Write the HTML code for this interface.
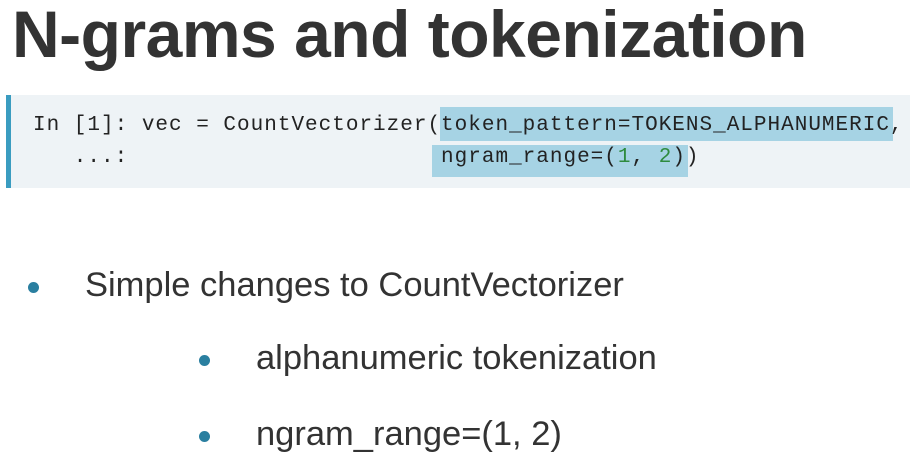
<!DOCTYPE html>
<html><head><style>
body{margin:0;width:910px;height:468px;background:#fff;position:relative;overflow:hidden;font-family:"Liberation Sans",sans-serif;color:#333}
.t{position:absolute;left:12px;top:-4px;font-size:66px;font-weight:bold;letter-spacing:-0.5px;white-space:nowrap;color:#333}
.code{position:absolute;left:6px;top:95px;width:904px;height:93px;background:#eef3f6;border-left:5px solid #3a9cc0;box-sizing:border-box}
.hl{position:absolute;background:#a6d3e4}
.m{position:absolute;font-family:"Liberation Mono",monospace;font-size:21px;letter-spacing:1px;white-space:pre;color:#222}
.g{color:#2e8b3e}
.dot{position:absolute;width:11px;height:11px;border-radius:50%;background:#2a7fa0}
.b{position:absolute;font-size:34.5px;color:#333;white-space:nowrap}
</style></head><body>
<div class="t">N-grams and tokenization</div>
<div class="code"></div>
<div class="hl" style="left:440px;top:107px;width:453px;height:34px"></div>
<div class="hl" style="left:432px;top:145px;width:256px;height:32px"></div>
<div class="m" style="left:33px;top:114px">In [1]: vec = CountVectorizer(token_pattern=TOKENS_ALPHANUMERIC,</div>
<div class="m" style="left:33px;top:146px">   ...:                       ngram_range=(<span class="g">1</span>, <span class="g">2</span>))</div>
<div class="dot" style="left:28px;top:282px"></div>
<div class="b" style="left:85px;top:266px">Simple changes to CountVectorizer</div>
<div class="dot" style="left:199px;top:355px"></div>
<div class="b" style="left:256px;top:339px">alphanumeric tokenization</div>
<div class="dot" style="left:199px;top:431px"></div>
<div class="b" style="left:256px;top:415px">ngram_range=(1, 2)</div>
</body></html>
